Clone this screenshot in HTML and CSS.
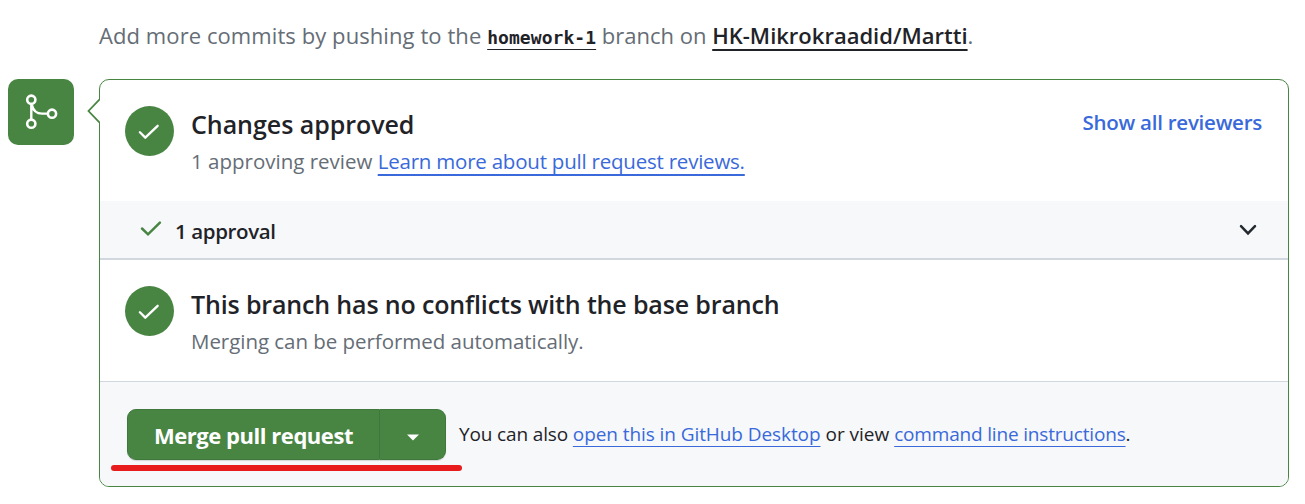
FILE: index.html
```html
<!DOCTYPE html>
<html lang="en">
<head>
<meta charset="utf-8">
<title>Merge pull request</title>
<link rel="stylesheet" href="styles.css">
</head>
<body>
<main class="page">
  <p class="hint"><span class="hint-lead">Add more commits by pushing to the </span><a class="branch">homework-1</a><span class="hint-mid"> branch on </span><a class="repo">HK-Mikrokraadid/Martti</a>.</p>
  <div class="timeline">
    <div class="badge">
      <svg class="merge-icon" viewBox="0 0 66 66" fill="none" stroke="#fff"><circle cx="23.3" cy="20.700" r="4.1" stroke-width="2.6"/><circle cx="23.3" cy="44.700" r="4.1" stroke-width="2.6"/><circle cx="44" cy="34.700" r="4.1" stroke-width="2.6"/><path d="M23.3 25v16M24 26.300c1.200 5.300 5 8.300 10 8.300h6" stroke-width="2.400"/></svg>
    </div>
    <section class="card">
      <svg class="pointer" viewBox="0 0 13 24"><path d="M13 0 1.500 12 13 24" fill="#fff" stroke="#488542" stroke-width="1.800"/></svg>
      <div class="status">
        <span class="circle"><svg viewBox="0 0 50 50"><path d="M15.200 26.300 20.700 31.800 33.300 19.700"/></svg></span>
        <div class="status-text">
          <h2 class="title title-review">Changes approved</h2>
          <p class="sub"><span class="sub-review">1 approving review </span><a class="learn">Learn more about pull request reviews.</a></p>
        </div>
        <a class="show-all">Show all reviewers</a>
      </div>
      <div class="approval">
        <svg class="tick" viewBox="0 0 22 18"><path d="M2 8.500 8 14.300 19.900 2.600"/></svg>
        <span class="approval-label">1 approval</span>
        <svg class="chevron" viewBox="0 0 18 12"><path d="M2 2.200 9 9.400 16 2.200"/></svg>
      </div>
      <div class="status">
        <span class="circle"><svg viewBox="0 0 50 50"><path d="M15.200 26.300 20.700 31.800 33.300 19.700"/></svg></span>
        <div class="status-text">
          <h2 class="title title-branch">This branch has no conflicts with the base branch</h2>
          <p class="sub sub-merge">Merging can be performed automatically.</p>
        </div>
      </div>
      <div class="footer">
        <div class="button-group">
          <button class="merge"><span>Merge pull request</span></button>
          <button class="more" aria-label="Select merge method"><svg viewBox="0 0 12 7"><path d="M0 .4h12L6 6.600z" fill="#fff"/></svg></button>
          <span class="marker"></span>
        </div>
        <p class="alt"><span class="alt-lead">You can also </span><a class="desktop">open this in GitHub Desktop</a><span class="alt-mid"> or view </span><a class="cli">command line instructions</a>.</p>
      </div>
    </section>
  </div>
</main>
</body>
</html>
```
FILE: styles.css
```css
* { box-sizing: border-box; }
body { margin: 0; background: #fff; color: #1f2328; font-family: "Open Sans", "Noto Sans", sans-serif; }
h2, p { margin: 0; white-space: pre; }
svg { display: block; }
.page { width: 1305px; height: 504px; padding: 15px 16px 0 8px; overflow: hidden; }
.hint { padding-left: 91px; height: 64px; font-size: 22px; line-height: 41px; color: #656d76; }
.hint-lead { letter-spacing: 0.08px; }
a { text-decoration-line: underline; text-decoration-skip-ink: none; text-decoration-thickness: 1px; text-underline-offset: 5px; }
.branch { font-family: "DejaVu Sans Mono", monospace; font-weight: 700; font-size: 18px; letter-spacing: 0.06px; color: #1f2328; }
.repo { font-weight: 600; color: #1f2328; text-decoration-thickness: 2px; }
.timeline { display: flex; gap: 25px; align-items: flex-start; }
.badge { width: 66px; height: 66px; border-radius: 10px; background: #488542; flex: none; }
.merge-icon { width: 66px; height: 66px; }
.card { position: relative; width: 1190px; height: 408px; border: 1px solid #488542; border-radius: 10px; }
.pointer { position: absolute; left: -13px; top: 19px; width: 13px; height: 24px; }
.status { display: flex; height: 121px; padding: 26px 26px 0 25px; }
.circle { width: 49px; height: 50px; border-radius: 50%; background: #488542; flex: none; }
.circle svg { width: 49px; height: 50px; fill: none; stroke: #fff; stroke-width: 2.4; stroke-linecap: round; stroke-linejoin: round; }
.status-text { margin-left: 17px; flex: 1; }
.title { font-size: 25px; line-height: 37px; font-weight: 600; }
.title-review { letter-spacing: -0.04px; }
.title-branch { letter-spacing: -0.15px; }
.sub { font-size: 20.500px; line-height: 36px; color: #656d76; }
.sub-merge { letter-spacing: -0.04px; }
.learn { color: #3969da; letter-spacing: -0.22px; text-decoration-thickness: 2px; }
.show-all { font-size: 20.500px; line-height: 32px; font-weight: 600; letter-spacing: -0.25px; color: #3969da; text-decoration: none; white-space: nowrap; }
.approval { display: flex; align-items: center; height: 59px; padding: 0 31px 0 40px; background: #f6f8fa; border-bottom: 2px solid #d0d7de; }
.tick { width: 22px; height: 18px; fill: none; stroke: #488542; stroke-width: 2.5; stroke-linecap: round; margin-top: -1px; }
.approval-label { margin-left: 13px; flex: 1; font-size: 20.500px; line-height: 30px; font-weight: 600; letter-spacing: -0.37px; padding-top: 2px; }
.chevron { width: 18px; height: 12px; fill: none; stroke: #24292f; stroke-width: 2.5; stroke-linecap: round; }
.footer { display: flex; height: 105px; padding: 27px 0 0 27px; background: #f6f8fa; border-top: 1px solid #d0d7de; border-radius: 0 0 9px 9px; }
.button-group { position: relative; display: flex; width: 319px; height: 51px; border-radius: 9px; box-shadow: 0 1px 1px #1f232828; }
button { margin: 0; padding: 0; border: 1px solid #3f773c; background: #488542; color: #fff; font: 700 22px/47px "Open Sans", "Noto Sans", sans-serif; }
.merge { width: 253px; padding: 2px 0 0 26px; letter-spacing: -0.46px; text-align: left; border-radius: 9px 0 0 9px; white-space: nowrap; }
.more { width: 66px; border-left: 0; border-radius: 0 9px 9px 0; display: flex; align-items: center; padding: 6px 0 0 27px; }
.more svg { width: 12px; height: 7px; }
.marker { position: absolute; left: -16px; top: 56px; width: 351px; height: 6px; border-radius: 3px; background: #e81c1c; }
.alt { margin-left: 13px; font-size: 19px; line-height: 50px; letter-spacing: -0.14px; }
.desktop, .cli { color: #3969da; }
.desktop { letter-spacing: -0.08px; }
.alt-mid { letter-spacing: 0; }
.cli { letter-spacing: -0.18px; }
```
